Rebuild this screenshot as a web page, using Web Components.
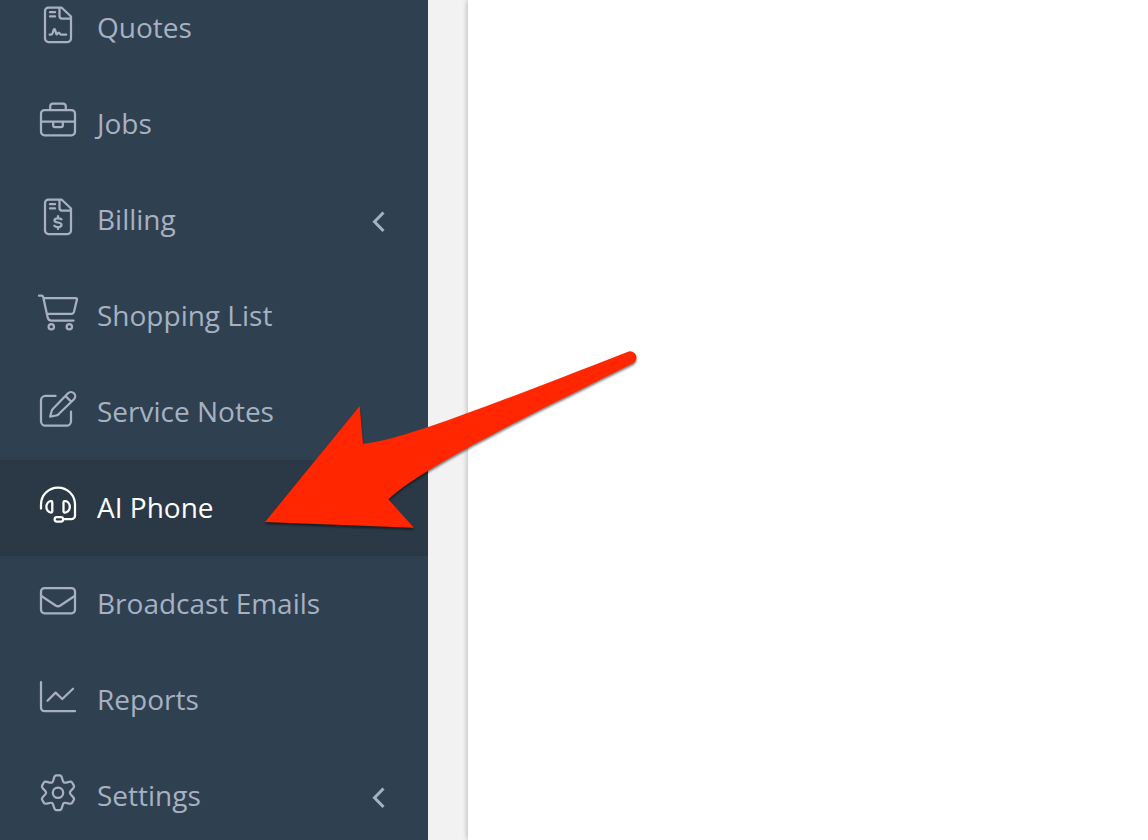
<!DOCTYPE html>
<html lang="en">
<head>
<meta charset="utf-8">
<title>AI Phone</title>
<style>
  body { margin: 0; font-family: "Open Sans", "Noto Sans", sans-serif; background: #f2f2f2; }
</style>
</head>
<body>
<app-shell>
  <side-nav slot="nav">
    <nav-item icon="quotes">Quotes</nav-item>
    <nav-item icon="jobs">Jobs</nav-item>
    <nav-item icon="billing" expandable>Billing</nav-item>
    <nav-item icon="cart">Shopping List</nav-item>
    <nav-item icon="notes">Service Notes</nav-item>
    <nav-item icon="headset" active>AI Phone</nav-item>
    <nav-item icon="mail">Broadcast Emails</nav-item>
    <nav-item icon="chart">Reports</nav-item>
    <nav-item icon="gear" expandable>Settings</nav-item>
  </side-nav>
  <pointer-arrow slot="overlay"></pointer-arrow>
</app-shell>

<script>
const page = '<path d="M10.500 3.500H23.500L33 12.500V34.500a3.500 3.500 0 0 1-3.500 3.500H10.500A3.500 3.500 0 0 1 7 34.500V7A3.500 3.500 0 0 1 10.500 3.500ZM21.500 3.500V12a2.500 2.500 0 0 0 2.500 2.500H33M12 8.200H17M12 12.400H17"/>';

// One sixth of the cog outline, turned around the centre six times.
function cog() {
  const sector = [[-4.2, -14], [-3.4, -17.3], [-1.8, -17.3], [1.8, -17.3], [3.4, -17.3], [4.2, -14], [5.2, -9.8]];
  const turn = ([x, y], k) => {
    const a = k * Math.PI / 3;
    return (20 + x * Math.cos(a) - y * Math.sin(a)).toFixed(2) + ' ' + (20.7 + x * Math.sin(a) + y * Math.cos(a)).toFixed(2);
  };
  let d = 'M' + turn(sector[0], 0);
  for (let k = 0; k < 6; k++) {
    const p = sector.map(v => turn(v, k));
    d += `Q${p[1]} ${p[2]}L${p[3]}Q${p[4]} ${p[5]}C${p[6]} ${turn([-5.2, -9.8], k + 1)} ${turn(sector[0], k + 1)}`;
  }
  return d + 'Z';
}

const ICONS = {
  quotes: page + '<path d="M11.600 30.600H13.200Q14.200 30.600 14.700 28.800L15.700 25.800Q16.500 24.300 17.200 26.200L18.300 30Q18.800 31 19.500 29.600Q20.800 27.500 21.800 29.600Q22.200 30.600 23.300 30.600H28.200"/>',
  jobs: '<rect x="3" y="10" width="34" height="25.300" rx="3.500"/><path d="M12.200 10V6.300a2.700 2.700 0 0 1 2.700-2.700H25.100A2.700 2.700 0 0 1 27.800 6.300V10M3 21.500H37M15.200 21.500V25.700a1.500 1.500 0 0 0 1.500 1.500H23.300a1.500 1.500 0 0 0 1.500-1.500V21.500"/>',
  billing: page + '<path d="M20 20V22M20 31V33M23.500 23.300Q22.300 22.300 20 22.300Q16.500 22.300 16.500 24.500Q16.500 26 20 26.500Q23.500 27 23.500 28.700Q23.500 31 20 31Q17.500 31 16.300 29.800"/>',
  cart: '<path d="M1 3.600H3.600Q4.900 3.600 5.200 4.900L9.600 25.200Q10.300 28.500 13.200 28.500H35.500M5.600 6H37.600Q39.300 6 38.900 7.700L36 19.700Q35.400 21.900 33.200 21.900H9"/><circle cx="13.300" cy="34.700" r="2.700"/><circle cx="31.300" cy="34.700" r="2.700"/>',
  notes: '<path d="M17.500 7.900H7.500A4.500 4.500 0 0 0 3 12.400V33.200A4.500 4.500 0 0 0 7.500 37.700H28.500A4.500 4.500 0 0 0 33 33.200V23.700M12.200 28.600L13.500 23.500Q13.800 22 15 20.800L30 5.300A4.200 4.200 0 0 1 36 11.200L20.500 26.300Q19.500 27.200 18 27.500ZM27.500 8L33.200 13.600"/>',
  headset: '<path d="M3 24.500V20.500a17 17 0 0 1 34 0V31.800A3.200 3.200 0 0 1 33.800 35H25.500"/><rect x="16.600" y="33" width="8.600" height="4.600" rx="2.300"/><path d="M14.300 18.500V27.500Q14.300 28.500 13.300 28.500H12.500A4.700 5.700 0 0 1 12.500 17.200H13.300Q14.300 17.200 14.300 18.500ZM25.500 18.500V27.500Q25.500 28.500 26.500 28.500H27.700A4.700 5.700 0 0 0 27.700 17.200H26.500Q25.500 17.200 25.500 18.500Z"/>',
  mail: '<rect x="3" y="8" width="34" height="25.300" rx="3.500"/><path d="M3 15.700L17.600 25.500Q20 27 22.400 25.500L37 15.700"/>',
  chart: '<path d="M3 6V31.700A3.500 3.500 0 0 0 6.500 35.200H37M9.500 24.700L17.600 16.600L24.300 23L35 12.800"/>',
  gear: `<path d="${cog()}"/><circle cx="20" cy="20.700" r="5.200"/>`
};

customElements.define('app-shell', class extends HTMLElement {
  constructor() {
    super();
    this.attachShadow({ mode: 'open' }).innerHTML = `
      <style>
        :host { display: flex; position: relative; height: 100vh; overflow: hidden; background: #f2f2f2; }
        main { flex: 1; margin-left: 40px; background: #fff; box-shadow: 0 0 6px rgba(0, 0, 0, .3); }
      </style>
      <slot name="nav"></slot>
      <main><slot></slot></main>
      <slot name="overlay"></slot>`;
  }
});

customElements.define('side-nav', class extends HTMLElement {
  constructor() {
    super();
    // The list is shown scrolled a little past its first row's top edge.
    this.attachShadow({ mode: 'open' }).innerHTML = `
      <style>
        :host { display: block; flex: 0 0 428px; overflow: hidden; background: #2f4050; }
        nav { display: flex; flex-direction: column; margin-top: -20px; }
      </style>
      <nav aria-label="Main"><slot></slot></nav>`;
  }
});

customElements.define('nav-item', class extends HTMLElement {
  constructor() {
    super();
    this.attachShadow({ mode: 'open' });
  }
  connectedCallback() {
    const active = this.hasAttribute('active');
    this.shadowRoot.innerHTML = `
      <style>
        :host { display: block; color: #a7b1c2; }
        :host([active]) { color: #fff; background: #2a3945; }
        a { display: flex; align-items: center; height: 96px; padding: 0 40px 0 38px; box-sizing: border-box;
            color: inherit; text-decoration: none; font-size: 28px; line-height: 40px; }
        svg { flex: none; fill: none; stroke: currentColor; stroke-linecap: round; stroke-linejoin: round; }
        .icon { width: 40px; height: 40px; margin: 0 19px 8px 0; stroke-width: 2.250; }
        .label { flex: 1; padding-bottom: 2px; white-space: nowrap; }
        .chevron { width: 20px; height: 24px; margin-top: 4px; stroke-width: 3; stroke-linecap: butt; stroke-linejoin: miter; }
      </style>
      <a href="#"${active ? ' aria-current="page"' : ''}>
        <svg class="icon" viewBox="0 0 40 40" aria-hidden="true">${ICONS[this.getAttribute('icon')]}</svg>
        <span class="label"><slot></slot></span>
        ${this.hasAttribute('expandable') ? '<svg class="chevron" viewBox="0 0 20 24" aria-hidden="true"><path d="M15.500 2.500L6.500 11.700L15.500 21"/></svg>' : ''}
      </a>`;
  }
});

customElements.define('pointer-arrow', class extends HTMLElement {
  constructor() {
    super();
    this.attachShadow({ mode: 'open' }).innerHTML = `
      <style>
        :host { position: absolute; left: 260px; top: 340px; width: 380px; height: 200px; pointer-events: none; }
        svg { display: block; overflow: visible; filter: drop-shadow(0 2px 1px rgba(0, 0, 0, .5)); }
      </style>
      <svg width="380" height="200" viewBox="260 340 380 200" aria-hidden="true">
        <path fill="#ff2600" d="M265 522L359.700 406L363 443.800C400 440 470 413 627.500 351.900A6.200 6.200 0 0 1 632.700 363.500C540 410 425 465 388.300 499.300L414 527.700Z"/>
      </svg>`;
  }
});
</script>
</body>
</html>
